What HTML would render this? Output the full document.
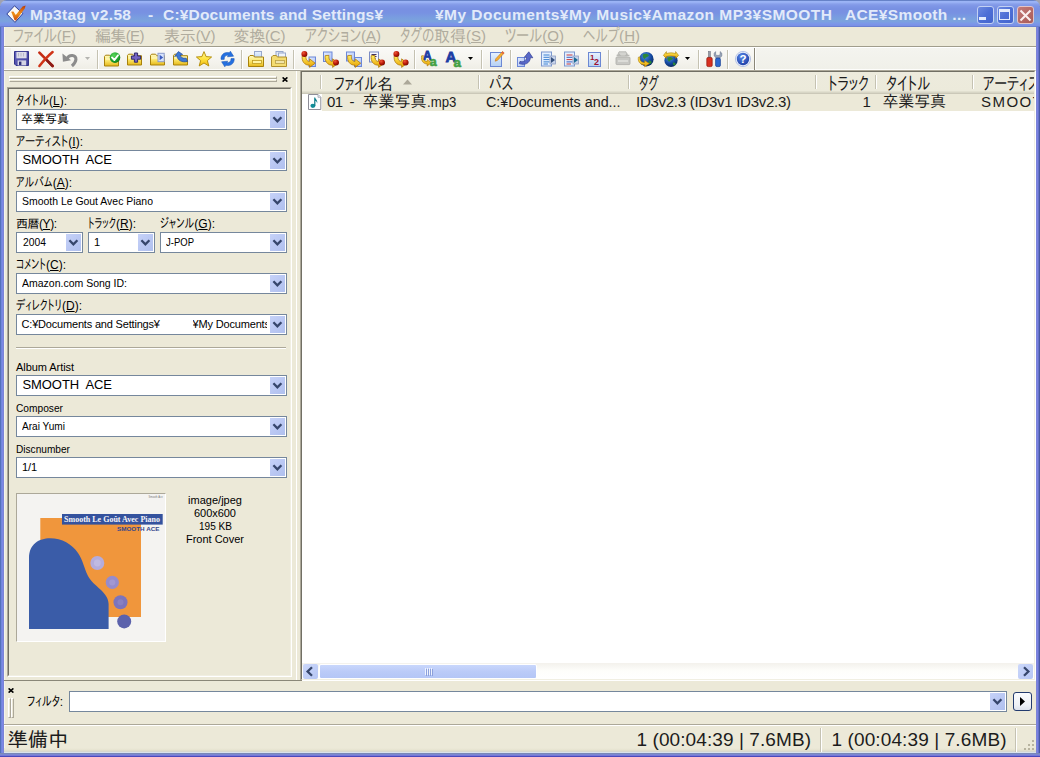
<!DOCTYPE html>
<html lang="ja"><head><meta charset="utf-8"><title>Mp3tag</title>
<style>
*{box-sizing:border-box;margin:0;padding:0}
html,body{width:1040px;height:757px;overflow:hidden;background:#ECE9D8}
body{position:relative;font-family:"Liberation Sans","IPAPGothic","IPAGothic","Noto Sans CJK JP",sans-serif;font-size:11px;color:#000}
.abs,.abs div,.abs svg,.abs i,.abs b{position:absolute}
.abs{left:0;top:0;width:1040px;height:757px;overflow:hidden}
.t{white-space:nowrap;line-height:1;font-weight:normal}
u{text-decoration:underline}
#frame{left:0;top:0;width:1040px;height:757px;background:linear-gradient(90deg,#5570BC 0,#5570BC 1px,#7087DC 1px,#7087DC 2px,#7C86E6 2px,#7C86E6 3px,#7A84D6 3px,#7A84D6 1037px,#7A80E2 1037px,#7A80E2 1038px,#6674C8 1038px,#6674C8 1039px,#4858A4 1039px)}
#fb{left:0;top:753px;width:1040px;height:4px;background:linear-gradient(#7888B8 0,#7888B8 1px,#7C88D0 1px,#7C88D0 2px,#7478D8 2px,#7478D8 3px,#4848BC 3px)}
#title{left:0;top:0;width:1040px;height:27px;border-radius:7px 7px 0 0;background:linear-gradient(#6682C8 0,#6682C8 1px,#9DB6F6 1px,#98B0F4 2.5px,#889FEA 4px,#7E96E6 6px,#7890E2 9px,#7892E2 13px,#799CE0 17px,#7BA3DD 21px,#7B98E8 23.5px,#7A8EE6 26px,#6A80D0 26px,#6A80D0 27px)}
#client{left:4px;top:27px;width:1032px;height:726px;background:#ECE9D8}
.tt{color:#E2EAFA;font-weight:bold;font-size:15.5px}
.menu{color:#B0AC9E;font-size:16px}
.cb{height:21px;border:1px solid #75879C;background:#fff}
.cb i{right:1px;top:1px;width:15px;height:17px;background:linear-gradient(135deg,#C6D2F8,#B8C6F2 60%,#B0C0EE)}
.cb svg{left:0;top:0}
.lb{font-size:11px}
.j{font-size:12px}
.l16{font-size:16px;color:#1c1c1c}
.st{font-size:19px;color:#1c1c1c}
.st .s{font-size:1em}
.km{font-size:1.14em}
.bm{display:inline-block;width:0;height:0;vertical-align:baseline}
.k{font-size:1.14em;display:inline-block;position:relative!important;height:1em;vertical-align:baseline}
.k span{display:inline-block;position:relative!important;transform-origin:0 50%;white-space:nowrap}
.s{font-size:.94em}
.menu .s{position:relative;top:-1px}
.sep{width:2px;height:19px;top:50px;border-left:1px solid #C5C2B2;border-right:1px solid #fff}

.ic{width:16px;height:16px;top:51px;overflow:visible}
</style></head><body>
<div class="abs">
<div id="frame"></div><div id="fb"></div><div style="left:0;top:0;width:6px;height:6px;background:#A0A2B0"></div><div style="left:1034px;top:0;width:6px;height:6px;background:#A0A2B0"></div><div id="title"></div><div id="client"></div>
<div style="left:4px;top:27px;width:1px;height:726px;background:#F4F3EC"></div>
<div style="left:977px;top:6px;width:17px;height:18px;border-radius:3px;border:1px solid #C3D1F3;background:linear-gradient(135deg,#6E8AE0,#4D6FD6 50%,#4464CE)"><div style="left:1px;top:10px;width:7px;height:3px;background:#E4ECFC"></div></div>
<div style="left:997px;top:6px;width:17px;height:18px;border-radius:3px;border:1px solid #C3D1F3;background:linear-gradient(135deg,#6E8AE0,#4D6FD6 50%,#4464CE)"><div style="left:1px;top:2px;width:11px;height:11px;border:1px solid #E4ECFC;border-top-width:3px"></div></div>
<div style="left:1017px;top:6px;width:17px;height:18px;border-radius:3px;border:1px solid #E3C4C8;background:linear-gradient(135deg,#C47C7C,#B66A66 50%,#A85C5A)"><svg style="left:1px;top:2px" width="13" height="13" viewBox="0 0 13 13"><path d="M1.5 1.5L11.5 11.5M11.5 1.5L1.5 11.5" stroke="#FBEFEF" stroke-width="2.1" fill="none"/></svg></div>
<svg style="left:4px;top:2px" width="24" height="24" viewBox="4 2 24 24"><defs><linearGradient id="gck" x1="0" y1="0" x2="0" y2="1"><stop offset="0" stop-color="#B83808"/><stop offset=".55" stop-color="#F09018"/><stop offset="1" stop-color="#C84810"/></linearGradient></defs><path d="M14.5 5.8L22.8 13.6L15 22.4L6.8 14Z" fill="#FBF8F6" stroke="#2C3F94" stroke-width="1"/><path d="M11.2 11.8L13.4 11.4L15.8 15L22.6 6.4L25.6 5.4L24.8 8.4L16 20.4L14.6 20.2Z" fill="url(#gck)"/></svg>
<div style="left:4px;top:46px;width:1032px;height:1px;background:#A09D8C"></div>
<div style="left:4px;top:47px;width:1032px;height:1px;background:#fff"></div>
<div style="left:4px;top:48px;width:751px;height:21px;background:linear-gradient(#FAFAF7,#F6F5F0 50%,#EFEEE6)"></div>
<div style="left:755px;top:48px;width:281px;height:21px;background:linear-gradient(#F4F4EF,#F0F0E9)"></div>
<div style="left:4px;top:48px;width:7px;height:21px;background:linear-gradient(#F4F3EC,#EEECE2)"></div>
<div style="left:4px;top:69px;width:1032px;height:1px;background:#FDFDFB"></div>
<div style="left:4px;top:70px;width:1032px;height:1px;background:#A8A598"></div>
<div style="left:754px;top:48px;width:1px;height:22px;background:#8A8778"></div><div style="left:755px;top:48px;width:1px;height:21px;background:#fff"></div>
<div class="sep" style="left:97px"></div>
<div class="sep" style="left:241px"></div>
<div class="sep" style="left:293px"></div>
<div class="sep" style="left:414px"></div>
<div class="sep" style="left:481px"></div>
<div class="sep" style="left:510px"></div>
<div class="sep" style="left:608px"></div>
<div class="sep" style="left:698px"></div>
<div class="sep" style="left:727px"></div>
<svg width="0" height="0" style="left:0;top:0"><defs>
<linearGradient id="gF" x1="0" y1="0" x2="0" y2="1"><stop offset="0" stop-color="#FFFBC4"/><stop offset=".5" stop-color="#FBE66C"/><stop offset="1" stop-color="#E6B818"/></linearGradient>
<linearGradient id="gY" x1="0" y1="0" x2="0" y2="1"><stop offset="0" stop-color="#FFF060"/><stop offset="1" stop-color="#E8A000"/></linearGradient>
<linearGradient id="gT" x1="0" y1="0" x2="0" y2="1"><stop offset="0" stop-color="#FFF8A0"/><stop offset=".5" stop-color="#FFE440"/><stop offset="1" stop-color="#F0B810"/></linearGradient>
<linearGradient id="gB" x1="0" y1="0" x2="1" y2="1"><stop offset="0" stop-color="#E4EEFF"/><stop offset="1" stop-color="#A8BCF4"/></linearGradient>
<linearGradient id="gP" x1="0" y1="0" x2="0" y2="1"><stop offset="0" stop-color="#E8F2FF"/><stop offset="1" stop-color="#B4D0F4"/></linearGradient>
<radialGradient id="gR" cx=".35" cy=".3" r=".8"><stop offset="0" stop-color="#F05838"/><stop offset=".55" stop-color="#B81808"/><stop offset="1" stop-color="#6C0C00"/></radialGradient>
<radialGradient id="gG" cx=".4" cy=".3" r=".8"><stop offset="0" stop-color="#58D858"/><stop offset=".7" stop-color="#189828"/><stop offset="1" stop-color="#0C7018"/></radialGradient>
<radialGradient id="gE" cx=".4" cy=".3" r=".8"><stop offset="0" stop-color="#4890E0"/><stop offset=".55" stop-color="#1448A0"/><stop offset="1" stop-color="#08204C"/></radialGradient>
<radialGradient id="gH" cx=".4" cy=".3" r=".8"><stop offset="0" stop-color="#5888E8"/><stop offset="1" stop-color="#1838A0"/></radialGradient>
<linearGradient id="gS" x1="0" y1="0" x2="1" y2="1"><stop offset="0" stop-color="#6868C0"/><stop offset="1" stop-color="#3C3C98"/></linearGradient>
</defs></svg>
<svg class="ic" style="left:14px;top:51px" width="16" height="16" viewBox="0 0 16 16"><path d="M.5 .5H14.5V14.5H2L.5 13Z" fill="url(#gS)" stroke="#34348C" stroke-width="1"/><rect x="2.4" y=".9" width="10.2" height="6.4" fill="#DCDCE8"/><path d="M4.5 2V5.5M7 2V5.5M9.5 2V5.5" stroke="#B8B8CC" stroke-width="1"/><rect x="3.6" y="9.4" width="8.6" height="5" fill="#D4D4E4"/><rect x="5" y="10.6" width="2.4" height="3.4" fill="#303078"/></svg>
<svg class="ic" style="left:37.5px;top:51px" width="16" height="16" viewBox="0 0 16 16"><path d="M1.4 1.6C4.4 4.6 9.6 9.8 14.6 15" stroke="#C42C14" stroke-width="2.7" stroke-linecap="round" fill="none"/><path d="M14.6 1C11 4 5.4 10 1.4 15" stroke="#D03418" stroke-width="2.5" stroke-linecap="round" fill="none"/><path d="M9 9.4C11 11.4 13 13.4 14.6 15" stroke="#8C1C18" stroke-width="2.5" stroke-linecap="round" fill="none"/></svg>
<svg class="ic" style="left:61.5px;top:51.5px" width="16" height="16" viewBox="0 0 16 16"><path d="M5 6.8C7 2.2 14.4 2.4 13.9 7.6C13.6 10.6 11.6 12.4 9.9 14" stroke="#8C8C8C" stroke-width="3.1" fill="none" stroke-linecap="butt"/><path d="M.4 1.4L.9 9.8L9 8.2Z" fill="#8C8C8C"/></svg>
<svg class="ic" style="left:104px;top:51.5px" width="16" height="16" viewBox="0 0 16 16"><path d="M.5 14V4.4L1.6 3.2H5.6L6.8 4.7H14.5V14Z" fill="url(#gF)" stroke="#A8820C" stroke-width="1"/><path d="M1.5 7H13.5" stroke="#FFFBD0" stroke-width="1"/><circle cx="11" cy="5.6" r="5.3" fill="url(#gG)"/><path d="M8 5.4L10.4 8L14 3.2" stroke="#fff" stroke-width="1.9" fill="none" stroke-linecap="round" stroke-linejoin="round"/></svg>
<svg class="ic" style="left:127px;top:51px" width="16" height="16" viewBox="0 0 16 16"><path d="M.5 14V4.4L1.6 3.2H5.6L6.8 4.7H14.5V14Z" fill="url(#gF)" stroke="#A8820C" stroke-width="1"/><path d="M1.5 7H13.5" stroke="#FFFBD0" stroke-width="1"/><path d="M7.4 2H10.6V5H13.6V8.2H10.6V11.2H7.4V8.2H4.4V5H7.4Z" fill="#7464C4" stroke="#30286C" stroke-width="1"/></svg>
<svg class="ic" style="left:150px;top:51px" width="16" height="16" viewBox="0 0 16 16"><path d="M.5 14V4.4L1.6 3.2H5.6L6.8 4.7H14.5V14Z" fill="url(#gF)" stroke="#A8820C" stroke-width="1"/><path d="M1.5 7H13.5" stroke="#FFFBD0" stroke-width="1"/><rect x="8" y="2.3" width="6.2" height="8.4" fill="#D8E4FC" stroke="#8C9CCC" stroke-width="1"/><path d="M9.6 3.8L13.2 6.5L9.6 9.2Z" fill="#3C5CC0"/></svg>
<svg class="ic" style="left:173px;top:51px" width="16" height="16" viewBox="0 0 16 16"><path d="M.5 14V4.4L1.6 3.2H5.6L6.8 4.7H14.5V14Z" fill="url(#gF)" stroke="#A8820C" stroke-width="1"/><path d="M1.5 7H13.5" stroke="#FFFBD0" stroke-width="1"/><path d="M5.4 .6L9.6 3.4L7.2 4C7.6 6.4 9.6 7.6 13.2 7.2L14.6 10.4C9 11.8 4.6 9.4 3.8 4.8L1.6 5.4Z" fill="#3C78D8" stroke="#1C4898" stroke-width=".7"/></svg>
<svg class="ic" style="left:196px;top:50.8px" width="16" height="16" viewBox="0 0 16 16"><path d="M8 .6L10.1 5.6L15.6 6L11.4 9.6L12.8 15L8 12L3.2 15L4.6 9.6L.4 6L5.9 5.6Z" fill="url(#gT)" stroke="#B08800" stroke-width=".9" stroke-linejoin="round"/></svg>
<svg class="ic" style="left:220px;top:51px" width="16" height="16" viewBox="0 0 16 16"><path d="M1 8.4C.6 3.4 5 .4 9.2 1.8L10.4 .2L13.6 5.2L7.4 5.8L8.4 4.4C6 3.8 4 5.4 4.2 8.4Z" fill="#2470E0" stroke="#1450B0" stroke-width=".5"/><path d="M14.2 7.6C14.6 12.6 10.2 15.6 6 14.2L4.8 15.8L1.6 10.8L7.8 10.2L6.8 11.6C9.2 12.2 11.2 10.6 11 7.6Z" fill="#2470E0" stroke="#1450B0" stroke-width=".5"/></svg>
<svg class="ic" style="left:247.5px;top:51px" width="16" height="16" viewBox="0 0 16 16"><rect x="6.5" y=".5" width="7" height="8" fill="url(#gP)" stroke="#98A8CC" stroke-width="1"/><path d="M.5 15.5V6L2 4.5H5.4L6.4 6H15.5V15.5Z" fill="url(#gF)" stroke="#A8820C" stroke-width="1"/><rect x="4.5" y="9.5" width="9" height="3" fill="#FFF4A0" stroke="#C09C20" stroke-width=".8"/></svg>
<svg class="ic" style="left:270.5px;top:51px" width="16" height="16" viewBox="0 0 16 16"><rect x="5" y=".5" width="7" height="8" fill="#E0E8F4" stroke="#98A8CC" stroke-width="1"/><rect x="7.5" y="2" width="7" height="8" fill="#EEF3FB" stroke="#98A8CC" stroke-width="1"/><path d="M.5 15.5V6L2 4.5H5.4L6.4 6H15.5V15.5Z" fill="#F4DC70" stroke="#B0902C" stroke-width="1"/><rect x="4.5" y="9.5" width="9" height="3" fill="#F0E4A8" stroke="#B8A048" stroke-width=".8"/></svg>
<svg class="ic" style="left:300.5px;top:50.6px" width="16" height="16" viewBox="0 0 16 16"><rect x="8" y="6" width="6.5" height="9.5" fill="url(#gB)" stroke="#6C88D8" stroke-width="1"/><path d="M5 4.4C4.4 8.2 6 10.4 8.6 10.4V7.8L14.2 12.2L8.6 16.4V14.2C3.6 14.4 .4 10.4 1.2 4.6Z" fill="url(#gY)" stroke="#A87000" stroke-width=".7"/><circle cx="3.4" cy="3" r="3" fill="url(#gR)"/></svg>
<svg class="ic" style="left:323px;top:50.6px" width="16" height="16" viewBox="0 0 16 16"><rect x="0.5" y="1" width="8.5" height="9.5" fill="url(#gB)" stroke="#6C88D8" stroke-width="1"/><g transform="translate(1,0)"><path d="M5 4.4C4.4 8.2 6 10.4 8.6 10.4V7.8L14.2 12.2L8.6 16.4V14.2C3.6 14.4 .4 10.4 1.2 4.6Z" fill="url(#gY)" stroke="#A87000" stroke-width=".7"/></g><circle cx="13" cy="11.4" r="3" fill="url(#gR)"/></svg>
<svg class="ic" style="left:346px;top:50.6px" width="16" height="16" viewBox="0 0 16 16"><rect x="0.5" y="1" width="8" height="9" fill="url(#gB)" stroke="#6C88D8" stroke-width="1"/><rect x="8.5" y="6.5" width="7" height="9" fill="url(#gB)" stroke="#6C88D8" stroke-width="1"/><g transform="translate(.5,0)"><path d="M5 4.4C4.4 8.2 6 10.4 8.6 10.4V7.8L14.2 12.2L8.6 16.4V14.2C3.6 14.4 .4 10.4 1.2 4.6Z" fill="url(#gY)" stroke="#A87000" stroke-width=".7"/></g></svg>
<svg class="ic" style="left:369px;top:50.6px" width="16" height="16" viewBox="0 0 16 16"><rect x=".5" y="1" width="9" height="10" fill="#F4F6FC" stroke="#7C8CC4" stroke-width="1"/><path d="M2.5 3.5H7.5M2.5 5.5H7.5M2.5 7.5H6.5M4.5 3.5V8" stroke="#403060" stroke-width="1"/><g transform="translate(1,0)"><path d="M5 4.4C4.4 8.2 6 10.4 8.6 10.4V7.8L14.2 12.2L8.6 16.4V14.2C3.6 14.4 .4 10.4 1.2 4.6Z" fill="url(#gY)" stroke="#A87000" stroke-width=".7"/></g><circle cx="13" cy="11.4" r="3" fill="url(#gR)"/></svg>
<svg class="ic" style="left:392.5px;top:50.6px" width="16" height="16" viewBox="0 0 16 16"><path d="M5 4.4C4.4 8.2 6 10.4 8.6 10.4V7.8L14.2 12.2L8.6 16.4V14.2C3.6 14.4 .4 10.4 1.2 4.6Z" fill="url(#gY)" stroke="#A87000" stroke-width=".7"/><circle cx="3.4" cy="3" r="3" fill="url(#gR)"/><circle cx="12.6" cy="11.4" r="3" fill="url(#gR)"/></svg>
<svg class="ic" style="left:421px;top:51px" width="16" height="16" viewBox="0 0 16 16"><text x="2" y="9" font-family="Liberation Sans,sans-serif" font-weight="bold" font-size="12" fill="#1C3CA4" stroke="#1C3CA4" stroke-width=".8">A</text><path d="M2.4 4.6C1.4 8.4 3.2 10.4 6.2 10.6V8.6L10.2 11.8L6.2 15V13C2.2 13 -.2 9.6 .6 4.8Z" fill="url(#gY)" stroke="#A87000" stroke-width=".6"/><text x="8.8" y="15.4" font-family="Liberation Sans,sans-serif" font-weight="bold" font-size="12.5" fill="#44A044" stroke="#44A044" stroke-width=".6">a</text></svg>
<svg class="ic" style="left:445px;top:51px" width="16" height="16" viewBox="0 0 16 16"><text x=".4" y="11" font-family="Liberation Sans,sans-serif" font-weight="bold" font-size="15" fill="#1C3CA4" stroke="#1C3CA4" stroke-width=".8">A</text><text x="8.6" y="16" font-family="Liberation Sans,sans-serif" font-weight="bold" font-size="13.5" fill="#44A044" stroke="#44A044" stroke-width=".6">a</text></svg>
<svg class="ic" style="left:489px;top:51px" width="16" height="16" viewBox="0 0 16 16"><rect x="1.5" y="1.5" width="11" height="14" fill="url(#gP)" stroke="#6C88D4" stroke-width="1"/><path d="M13.6 .4L15.2 2L8.4 9.4L6.2 10.2L6.8 7.8Z" fill="#F8B030" stroke="#C07010" stroke-width=".6"/><path d="M12.4 1.6L13.6 .4L15.2 2L14 3.2Z" fill="#E06048"/></svg>
<svg class="ic" style="left:517px;top:51px" width="16" height="16" viewBox="0 0 16 16"><rect x="0.5" y="6.5" width="7" height="9" fill="url(#gB)" stroke="#6C88D8" stroke-width="1"/><path d="M3 10.4C6 11.4 9.4 10 9.6 6.4L7.4 6.2L11.8 .8L15.8 6.8L13.4 6.6C13 12.4 7.6 14.6 2.4 12.6Z" fill="#5868C8" stroke="#303C94" stroke-width=".7"/></svg>
<svg class="ic" style="left:540.5px;top:51px" width="16" height="16" viewBox="0 0 16 16"><rect x=".5" y="1" width="10" height="14" fill="#E4F0FF" stroke="#7C98D0" stroke-width="1"/><path d="M2.5 4H8.5M2.5 6.3H8.5M2.5 8.6H8.5M2.5 10.9H8.5M2.5 13H7" stroke="#3C80D0" stroke-width="1"/><rect x="9" y="5" width="5.5" height="8" fill="#C8D4EC" stroke="#8C9CC0" stroke-width=".8"/><path d="M10 6L14 9L10 12Z" fill="#34507C"/></svg>
<svg class="ic" style="left:563.5px;top:51px" width="16" height="16" viewBox="0 0 16 16"><rect x=".5" y="1" width="10" height="14" fill="#E4F0FF" stroke="#7C98D0" stroke-width="1"/><path d="M2.5 4H8.5M2.5 8.6H8.5M2.5 13H7" stroke="#C83838" stroke-width="1"/><path d="M2.5 6.3H8.5M2.5 10.9H8.5" stroke="#3C60C0" stroke-width="1"/><rect x="9" y="5" width="5.5" height="8" fill="#C8D4EC" stroke="#8C9CC0" stroke-width=".8"/><path d="M10 6L14 9L10 12Z" fill="#1C6C94"/></svg>
<svg class="ic" style="left:587px;top:51px" width="16" height="16" viewBox="0 0 16 16"><rect x="1.5" y="1.5" width="12" height="14" fill="url(#gP)" stroke="#6C88D4" stroke-width="1"/><text x="3" y="8.6" font-family="Liberation Sans,sans-serif" font-weight="bold" font-size="8" fill="#A01030">1</text><text x="7" y="13.6" font-family="Liberation Sans,sans-serif" font-weight="bold" font-size="9" fill="#A01030">2</text></svg>
<svg class="ic" style="left:614.5px;top:51px" width="16" height="16" viewBox="0 0 16 16"><path d="M4 .8H11L12.6 5H2.4Z" fill="#D4D4D0" stroke="#B0B0AC" stroke-width=".8"/><path d="M1.6 4.4H5L3.6 2.6M14.4 4.4H11L12.4 2.6" stroke="#B8B8B4" stroke-width="1.2" fill="none"/><rect x="1" y="6" width="14" height="7.6" rx="1" fill="#C8C8C4" stroke="#ACACA8" stroke-width=".8"/><rect x="3" y="9" width="10" height="2" fill="#DCDCD8"/></svg>
<svg class="ic" style="left:637.5px;top:51px" width="16" height="16" viewBox="0 0 16 16"><circle cx="8.4" cy="8.2" r="7.2" fill="url(#gE)"/><path d="M5 3.4C7 2.4 9.8 2.6 11 4.6C9.8 6.6 7.6 6 6.8 8C5.6 7.6 4.2 5.6 5 3.4ZM10.6 9.6C12.4 9 13.8 10 13.6 11.8C12.6 13.4 11 13.6 10.4 12Z" fill="#2C8838"/><path d="M2 6C1.4 9.4 3.2 11.4 6.6 11.6V9.6L11.4 12.6L6.6 15.8V13.8C2 13.8 -.4 10.4 .4 6.2Z" fill="url(#gY)" stroke="#B07800" stroke-width=".6"/></svg>
<svg class="ic" style="left:662.5px;top:51px" width="16" height="16" viewBox="0 0 16 16"><circle cx="8" cy="9.4" r="6.6" fill="url(#gE)"/><path d="M4.6 6.6C6.6 5.6 9 6 10 7.6C9 9.4 7 9 6.4 10.8C5.2 10.4 4 8.6 4.6 6.6ZM10 11.6C11.6 11 12.8 12 12.6 13.4C11.8 14.6 10.4 14.8 10 13.6Z" fill="#2C8838"/><path d="M.4 4.4L3.4 .6V2.6C6.4 1.6 9.6 1.6 12.6 2.6V.6L15.6 4.4L12.6 7.4V5.6C9.6 4.8 6.4 4.8 3.4 5.6V7.4Z" fill="url(#gY)" stroke="#A87C00" stroke-width=".6"/></svg>
<svg class="ic" style="left:705.5px;top:51px" width="16" height="16" viewBox="0 0 16 16"><rect x="2.4" y=".4" width="2" height="6.4" fill="#989CA8" stroke="#686C78" stroke-width=".5"/><rect x=".8" y="6.4" width="5.4" height="9.2" rx="1.4" fill="#D83020" stroke="#901408" stroke-width=".7"/><path d="M9.6 .6V3.4L10.8 4.4H13L14.2 3.4V.6L15.8 2.2V5L14 6.8V7.4H10V6.8L8.2 5V2.2Z" fill="#98A4B8" stroke="#5C6880" stroke-width=".5"/><rect x="9.6" y="7" width="4.8" height="8.6" rx="1.4" fill="#2C68D0" stroke="#143C90" stroke-width=".7"/></svg>
<svg class="ic" style="left:734.5px;top:51px" width="16" height="16" viewBox="0 0 16 16"><circle cx="8" cy="8" r="7.6" fill="#E8EEFC" stroke="#A8B8E0" stroke-width=".8"/><circle cx="8" cy="8" r="6.2" fill="url(#gH)"/><text x="8" y="12.2" text-anchor="middle" font-family="Liberation Sans,sans-serif" font-weight="bold" font-size="11.5" fill="#fff">?</text></svg>
<svg style="left:84.5px;top:57px" width="5" height="3" viewBox="0 0 5 3"><path d="M0 0H5L2.5 3Z" fill="#B4B4B0"/></svg>
<svg style="left:468px;top:57px" width="5" height="3" viewBox="0 0 5 3"><path d="M0 0H5L2.5 3Z" fill="#000"/></svg>
<svg style="left:685px;top:57px" width="5" height="3" viewBox="0 0 5 3"><path d="M0 0H5L2.5 3Z" fill="#000"/></svg>
<div style="left:9px;top:76px;width:268px;height:3px;border:1px solid #fff;border-right-color:#ACA899;border-bottom-color:#ACA899"></div>
<div style="left:9px;top:79px;width:268px;height:3px;border:1px solid #fff;border-right-color:#ACA899;border-bottom-color:#ACA899"></div>
<svg style="left:282px;top:77px" width="6" height="5" viewBox="0 0 6 5"><path d="M.6 .4L5.4 4.6M5.4 .4L.6 4.6" stroke="#000" stroke-width="1.6"/></svg>
<div style="left:296px;top:71px;width:1px;height:609px;background:#fff"></div>
<div style="left:7px;top:87px;width:285px;height:590px;border:1px solid #ACA899;border-right-color:#fff;border-bottom-color:#fff"></div>
<div style="left:8px;top:88px;width:283px;height:588px;border:1px solid #716F64;border-right-color:#F1EFE2;border-bottom-color:#F1EFE2"></div>
<div class="cb" style="left:16px;top:109px;width:271px"><i><svg width="15" height="17" viewBox="0 0 15 17"><path d="M3.4 6.3L7.4 10.4L11.4 6.3" stroke="#36466C" stroke-width="2.3" fill="none"/></svg></i></div>
<div class="cb" style="left:16px;top:150px;width:271px"><i><svg width="15" height="17" viewBox="0 0 15 17"><path d="M3.4 6.3L7.4 10.4L11.4 6.3" stroke="#36466C" stroke-width="2.3" fill="none"/></svg></i></div>
<div class="cb" style="left:16px;top:191px;width:271px"><i><svg width="15" height="17" viewBox="0 0 15 17"><path d="M3.4 6.3L7.4 10.4L11.4 6.3" stroke="#36466C" stroke-width="2.3" fill="none"/></svg></i></div>
<div class="cb" style="left:16px;top:232px;width:67px"><i><svg width="15" height="17" viewBox="0 0 15 17"><path d="M3.4 6.3L7.4 10.4L11.4 6.3" stroke="#36466C" stroke-width="2.3" fill="none"/></svg></i></div>
<div class="cb" style="left:88px;top:232px;width:67px"><i><svg width="15" height="17" viewBox="0 0 15 17"><path d="M3.4 6.3L7.4 10.4L11.4 6.3" stroke="#36466C" stroke-width="2.3" fill="none"/></svg></i></div>
<div class="cb" style="left:160px;top:232px;width:127px"><i><svg width="15" height="17" viewBox="0 0 15 17"><path d="M3.4 6.3L7.4 10.4L11.4 6.3" stroke="#36466C" stroke-width="2.3" fill="none"/></svg></i></div>
<div class="cb" style="left:16px;top:273px;width:271px"><i><svg width="15" height="17" viewBox="0 0 15 17"><path d="M3.4 6.3L7.4 10.4L11.4 6.3" stroke="#36466C" stroke-width="2.3" fill="none"/></svg></i></div>
<div class="cb" style="left:16px;top:314px;width:271px"><i><svg width="15" height="17" viewBox="0 0 15 17"><path d="M3.4 6.3L7.4 10.4L11.4 6.3" stroke="#36466C" stroke-width="2.3" fill="none"/></svg></i></div>
<div class="cb" style="left:16px;top:375px;width:271px"><i><svg width="15" height="17" viewBox="0 0 15 17"><path d="M3.4 6.3L7.4 10.4L11.4 6.3" stroke="#36466C" stroke-width="2.3" fill="none"/></svg></i></div>
<div class="cb" style="left:16px;top:416px;width:271px"><i><svg width="15" height="17" viewBox="0 0 15 17"><path d="M3.4 6.3L7.4 10.4L11.4 6.3" stroke="#36466C" stroke-width="2.3" fill="none"/></svg></i></div>
<div class="cb" style="left:16px;top:457px;width:271px"><i><svg width="15" height="17" viewBox="0 0 15 17"><path d="M3.4 6.3L7.4 10.4L11.4 6.3" stroke="#36466C" stroke-width="2.3" fill="none"/></svg></i></div>
<div style="left:16px;top:347px;width:270px;height:2px;border-top:1px solid #ACA899;border-bottom:1px solid #fff"></div>
<div style="left:16px;top:493px;width:150px;height:149px;background:#F3F2F0;border:1px solid #ACA899;border-right-color:#fff;border-bottom-color:#fff"></div>
<svg style="left:17px;top:494px" width="148" height="147" viewBox="17 494 148 147">
<rect x="17" y="494" width="148" height="147" fill="#F4F3F1"/>
<rect x="40.3" y="518" width="100.7" height="99" fill="#F0963C"/>
<path d="M29 629V558C29 544 39 538.2 50 538.2C62 538.2 72 544 78 553C83 560 84 568 88 576C93 586 108.6 592 108.6 604V629Z" fill="#3A5CA8"/>
<rect x="62" y="514" width="100.7" height="10.6" fill="#34529E"/>
<text x="64" y="522.4" font-family="Liberation Serif,serif" font-weight="bold" font-size="8.2" fill="#F4F4F8" textLength="96" lengthAdjust="spacingAndGlyphs">Smooth Le Goût Avec Piano</text>
<text x="117" y="530.6" font-family="Liberation Sans,sans-serif" font-weight="bold" font-size="5.6" fill="#34468C" textLength="42.5" lengthAdjust="spacingAndGlyphs">SMOOTH ACE</text>
<text x="148.6" y="497.6" font-family="Liberation Sans,sans-serif" font-size="2.6" fill="#777" textLength="14">Smooth Ace</text>
<circle cx="97.3" cy="563" r="7" fill="#B4ACDC"/><circle cx="97.3" cy="563" r="3.4" fill="#C0BAE2"/>
<circle cx="112.3" cy="582.4" r="6.6" fill="#968CCC"/><circle cx="112.3" cy="582.4" r="3" fill="#A298D2"/>
<circle cx="120.5" cy="602.3" r="7" fill="#7C74BC"/><circle cx="120.5" cy="602.3" r="3" fill="#8880C2"/>
<circle cx="124.2" cy="621.4" r="7" fill="#5C62AC"/>
</svg>
<div style="left:300px;top:70px;width:736px;height:611px;border:1px solid #ACA899;border-right-color:#fff;border-bottom-color:#fff"></div>
<div style="left:301px;top:71px;width:734px;height:609px;background:#fff;border:1px solid #716F64;border-right-color:#F1EFE2;border-bottom-color:#F1EFE2"></div>
<div style="left:302px;top:72px;width:732px;height:22px;background:linear-gradient(#EDEBDD 0,#ECEADB 19px,#E2E0D0 19px,#E2E0D0 20px,#D8D6C6 20px,#D8D6C6 21px,#CBC8B8 21px)"></div>
<div style="left:320px;top:75px;width:2px;height:14px;border-left:1px solid #C5C2B2;border-right:1px solid #fff"></div>
<div style="left:478px;top:75px;width:2px;height:14px;border-left:1px solid #C5C2B2;border-right:1px solid #fff"></div>
<div style="left:628px;top:75px;width:2px;height:14px;border-left:1px solid #C5C2B2;border-right:1px solid #fff"></div>
<div style="left:815px;top:75px;width:2px;height:14px;border-left:1px solid #C5C2B2;border-right:1px solid #fff"></div>
<div style="left:875px;top:75px;width:2px;height:14px;border-left:1px solid #C5C2B2;border-right:1px solid #fff"></div>
<div style="left:972px;top:75px;width:2px;height:14px;border-left:1px solid #C5C2B2;border-right:1px solid #fff"></div>
<svg style="left:403px;top:79px" width="9" height="6" viewBox="0 0 9 6"><path d="M0 5.5L4.5 0.5L9 5.5Z" fill="#ACA899"/></svg>
<div style="left:322px;top:94px;width:712px;height:17px;background:#ECE9D8"></div>
<svg style="left:308px;top:94px" width="14" height="16" viewBox="0 0 14 16"><path d="M.5 .5H10L12.8 3.3V15.5H.5Z" fill="#FCFDFF" stroke="#8E8E98"/><path d="M10 .5V3.3H12.8" fill="#E4E8F0" stroke="#A0A4B0" stroke-width=".8"/><ellipse cx="4.9" cy="11.8" rx="2.5" ry="2.1" fill="#108C98"/><path d="M6.2 11.8V3.6H7.2C7.6 5.4 9.8 6.2 9.2 9.4C8.8 7.6 8 7 7.4 6.8V11.8Z" fill="#0C7C88"/></svg>
<div style="left:302px;top:663px;width:732px;height:16px;background:linear-gradient(#F3F1EC,#FEFEFB 50%,#FFFFFF)"></div>
<div style="left:303px;top:664px;width:15px;height:15px;border-radius:2px;background:linear-gradient(135deg,#CBD7FA,#B6C6F4)"><svg style="left:0;top:0" width="15" height="15" viewBox="0 0 15 15"><path d="M9 3.2L4.6 7.5L9 11.8" stroke="#36466C" stroke-width="2.3" fill="none"/></svg></div>
<div style="left:1018px;top:664px;width:15px;height:15px;border-radius:2px;background:linear-gradient(135deg,#CBD7FA,#B6C6F4)"><svg style="left:0;top:0" width="15" height="15" viewBox="0 0 15 15"><path d="M6 3.2L10.4 7.5L6 11.8" stroke="#36466C" stroke-width="2.3" fill="none"/></svg></div>
<div style="left:319px;top:664px;width:218px;height:15px;border-radius:2px;border:1px solid #fff;box-shadow:0 0 0 0 #fff;background:linear-gradient(#C9D7FC,#BBCBF8 50%,#B4C6F6)"><div style="left:105px;top:3px;width:1px;height:7px;background:#EEF3FE;box-shadow:1px 1px 0 #8CA0DC,2px 0 0 #EEF3FE,3px 1px 0 #8CA0DC,4px 0 0 #EEF3FE,5px 1px 0 #8CA0DC,6px 0 0 #EEF3FE,7px 1px 0 #8CA0DC"></div></div>
<div style="left:4px;top:680px;width:298px;height:1px;background:#8A8778"></div>
<svg style="left:8px;top:688px" width="6" height="5" viewBox="0 0 6 5"><path d="M.6 .4L5.4 4.6M5.4 .4L.6 4.6" stroke="#000" stroke-width="1.6"/></svg>
<div style="left:8px;top:698px;width:3px;height:20px;border:1px solid #fff;border-right-color:#ACA899;border-bottom-color:#ACA899"></div>
<div style="left:11px;top:698px;width:3px;height:20px;border:1px solid #fff;border-right-color:#ACA899;border-bottom-color:#ACA899"></div>
<div class="cb" style="left:69px;top:691px;width:938px"><i><svg width="15" height="17" viewBox="0 0 15 17"><path d="M3.4 6.3L7.4 10.4L11.4 6.3" stroke="#36466C" stroke-width="2.3" fill="none"/></svg></i></div>
<div style="left:1013px;top:692px;width:19px;height:19px;border-radius:3px;border:1px solid #233B6E;background:linear-gradient(#FBFCFE,#EEF1F6 70%,#DDE2EC)"><svg style="left:6px;top:4px" width="5" height="9" viewBox="0 0 5 9"><path d="M0 0L5 4.5L0 9Z" fill="#000"/></svg></div>
<div style="left:4px;top:748px;width:1032px;height:5px;background:linear-gradient(#ECE9D8 0,#E6E3D0 2px,#E0DECB 2px,#E0DECB 3px,#D6D8CE 3px,#D6D8CE 4px,#D8E2EC 4px)"></div>
<div style="left:4px;top:724px;width:1032px;height:1px;background:#ACA899"></div>
<div style="left:4px;top:725px;width:1032px;height:1px;background:#fff"></div>
<div style="left:1015px;top:728px;width:2px;height:24px;border-left:1px solid #C5C2B2;border-right:1px solid #fff"></div>
<div style="left:820px;top:728px;width:2px;height:24px;border-left:1px solid #C5C2B2;border-right:1px solid #fff"></div>
<svg style="left:1023px;top:739px" width="13" height="13" viewBox="0 0 13 13"><g fill="#B8B4A0"><rect x="9" y="1" width="2" height="2"/><rect x="5" y="5" width="2" height="2"/><rect x="9" y="5" width="2" height="2"/><rect x="1" y="9" width="2" height="2"/><rect x="5" y="9" width="2" height="2"/><rect x="9" y="9" width="2" height="2"/></g></svg>
<div class="t tt" style="left:30px;top:7px;letter-spacing:0.331px;">Mp3tag v2.58</div>
<div class="t tt" style="left:148px;top:7px;">-</div>
<div class="t tt" style="left:163px;top:7px;letter-spacing:0.188px;">C:¥Documents and Settings¥</div>
<div class="t tt" style="left:435px;top:7px;letter-spacing:0.462px;">¥My Documents¥My Music¥Amazon MP3¥SMOOTH</div>
<div class="t tt" style="left:845px;top:7px;letter-spacing:0.364px;">ACE¥Smooth ...</div>
<div class="t menu" style="left:12.5px;top:27px;"><span class="k" style="width:44.28px"><span style="transform:scaleX(0.742)">ファイル</span></span><span class="s">(</span><u><span class="s">F</span></u><span class="s">)</span></div>
<div class="t menu" style="left:95px;top:29px;letter-spacing:-0.641px;">編集<span class="s">(</span><u><span class="s">E</span></u><span class="s">)</span></div>
<div class="t menu" style="left:164px;top:29px;letter-spacing:-0.141px;">表示<span class="s">(</span><u><span class="s">V</span></u><span class="s">)</span></div>
<div class="t menu" style="left:233.5px;top:29px;letter-spacing:-0.223px;">変換<span class="s">(</span><u><span class="s">C</span></u><span class="s">)</span></div>
<div class="t menu" style="left:304.5px;top:27px;"><span class="k" style="width:56.44px"><span style="transform:scaleX(0.755)">アクション</span></span><span class="s">(</span><u><span class="s">A</span></u><span class="s">)</span></div>
<div class="t menu" style="left:399.5px;top:27px;"><span class="k" style="width:34.44px"><span style="transform:scaleX(0.702)">タグの</span></span>取得<span class="s">(</span><u><span class="s">S</span></u><span class="s">)</span></div>
<div class="t menu" style="left:505px;top:27px;"><span class="k" style="width:37.27px"><span style="transform:scaleX(0.738)">ツール</span></span><span class="s">(</span><u><span class="s">O</span></u><span class="s">)</span></div>
<div class="t menu" style="left:582.5px;top:27px;"><span class="k" style="width:36.61px"><span style="transform:scaleX(0.702)">ヘルプ</span></span><span class="s">(</span><u><span class="s">H</span></u><span class="s">)</span></div>
<div class="t lb j" style="left:16px;top:94px;"><span class="k" style="width:32.97px"><span style="transform:scaleX(0.735)">タイトル</span></span>(<u>L</u>):</div>
<div class="t lb j" style="left:16px;top:135px;"><span class="k" style="width:52.31px"><span style="transform:scaleX(0.768)">アーティスト</span></span>(<u>I</u>):</div>
<div class="t lb j" style="left:16px;top:176px;"><span class="k" style="width:36.64px"><span style="transform:scaleX(0.716)">アルバム</span></span>(<u>A</u>):</div>
<div class="t lb j" style="left:16px;top:218px;letter-spacing:-0.472px;">西暦(<u>Y</u>):</div>
<div class="t lb j" style="left:88px;top:217px;"><span class="k" style="width:27.98px"><span style="transform:scaleX(0.667)">トラック</span></span>(<u>R</u>):</div>
<div class="t lb j" style="left:160px;top:217px;"><span class="k" style="width:34.31px"><span style="transform:scaleX(0.717)">ジャンル</span></span>(<u>G</u>):</div>
<div class="t lb j" style="left:16px;top:258px;"><span class="k" style="width:29.98px"><span style="transform:scaleX(0.687)">コメント</span></span>(<u>C</u>):</div>
<div class="t lb j" style="left:16px;top:299px;"><span class="k" style="width:45.98px"><span style="transform:scaleX(0.720)">ディレクトリ</span></span>(<u>D</u>):</div>
<div class="t lb" style="left:16px;top:361.5px;letter-spacing:-0.062px;">Album Artist</div>
<div class="t lb" style="left:16px;top:402.5px;transform:scaleX(0.926);transform-origin:0 0;">Composer</div>
<div class="t lb" style="left:16px;top:443.5px;transform:scaleX(0.920);transform-origin:0 0;">Discnumber</div>
<div class="t lb j" style="left:21px;top:112.5px;">卒業写真</div>
<div class="t lb" style="left:22.5px;top:152.5px;font-size:13px;letter-spacing:-0.080px;">SMOOTH&nbsp; ACE</div>
<div class="t lb" style="left:22px;top:196px;transform:scaleX(0.949);transform-origin:0 0;">Smooth Le Gout Avec Piano</div>
<div class="t lb" style="left:22.5px;top:237px;transform:scaleX(0.939);transform-origin:0 0;">2004</div>
<div class="t lb" style="left:94px;top:237px;">1</div>
<div class="t lb" style="left:166px;top:237px;transform:scaleX(0.864);transform-origin:0 0;">J-POP</div>
<div class="t lb" style="left:22px;top:278px;transform:scaleX(0.954);transform-origin:0 0;">Amazon.com Song ID:</div>
<div class="t lb" style="left:21.5px;top:319px;letter-spacing:-0.184px;">C:¥Documents and Settings¥</div>
<div class="t lb" style="left:192.5px;top:319px;letter-spacing:-0.165px;width:74.5px;overflow:hidden;">¥My Documents</div>
<div class="t lb" style="left:22.5px;top:377.5px;font-size:13px;letter-spacing:-0.080px;">SMOOTH&nbsp; ACE</div>
<div class="t lb" style="left:22px;top:421px;transform:scaleX(0.917);transform-origin:0 0;">Arai Yumi</div>
<div class="t lb" style="left:22px;top:462px;letter-spacing:-0.148px;">1/1</div>
<div class="t lb" style="left:188px;top:494.5px;letter-spacing:0.019px;">image/jpeg</div>
<div class="t lb" style="left:194px;top:507.5px;letter-spacing:-0.036px;">600x600</div>
<div class="t lb" style="left:199px;top:520.5px;transform:scaleX(0.914);transform-origin:0 0;">195 KB</div>
<div class="t lb" style="left:186px;top:533.5px;letter-spacing:-0.008px;">Front Cover</div>
<div class="t l16" style="left:333.5px;top:75px;"><span class="k" style="width:43.50px"><span style="transform:scaleX(0.729)">ファイル</span></span>名</div>
<div class="t l16" style="left:489px;top:75px;"><span class="k" style="width:24.00px"><span style="transform:scaleX(0.704)">パス</span></span></div>
<div class="t l16" style="left:639px;top:75px;"><span class="k" style="width:20.00px"><span style="transform:scaleX(0.638)">タグ</span></span></div>
<div class="t l16" style="left:828px;top:75px;"><span class="k" style="width:41.00px"><span style="transform:scaleX(0.732)">トラック</span></span></div>
<div class="t l16" style="left:886px;top:75px;"><span class="k" style="width:44.50px"><span style="transform:scaleX(0.744)">タイトル</span></span></div>
<div class="t l16" style="left:983px;top:75px;width:51px;overflow:hidden;"><span class="k" style="width:66.00px"><span style="transform:scaleX(0.727)">アーティスト</span></span></div>
<div class="t l16" style="left:327px;top:94px;letter-spacing:-0.534px;"><span class="s">01</span></div>
<div class="t l16" style="left:349.5px;top:94px;"><span class="s">-</span></div>
<div class="t l16" style="left:362.4px;top:94px;letter-spacing:0.067px;">卒業写真</div>
<div class="t l16" style="left:426.5px;top:94px;transform:scaleX(0.877);transform-origin:0 0;"><span class="s">.mp3</span></div>
<div class="t l16" style="left:485.5px;top:94px;transform:scaleX(0.953);transform-origin:0 0;"><span class="s">C:¥Documents and...</span></div>
<div class="t l16" style="left:636px;top:94px;letter-spacing:-0.283px;"><span class="s">ID3v2.3 (ID3v1 ID3v2.3)</span></div>
<div class="t l16" style="left:862.5px;top:94px;"><span class="s">1</span></div>
<div class="t l16" style="left:882.5px;top:94px;letter-spacing:-0.167px;">卒業写真</div>
<div class="t l16" style="left:981px;top:94px;letter-spacing:1.431px;width:53px;overflow:hidden;"><span class="s">SMOOTH</span>&nbsp;<span class="s"> ACE</span></div>
<div class="t lb j" style="left:26.5px;top:695px;"><span class="k" style="width:33.16px"><span style="transform:scaleX(0.744)">フィルタ</span></span>:</div>
<div class="t st" style="left:7.5px;top:729.5px;font-size:20.5px;letter-spacing:-0.200px;">準備中</div>
<div class="t st" style="left:636.5px;top:729.5px;letter-spacing:0.086px;"><span class="s">1 (00:04:39 | 7.6MB)</span></div>
<div class="t st" style="left:831.5px;top:729.5px;letter-spacing:0.112px;"><span class="s">1 (00:04:39 | 7.6MB)</span></div>

</div>
</body></html>
